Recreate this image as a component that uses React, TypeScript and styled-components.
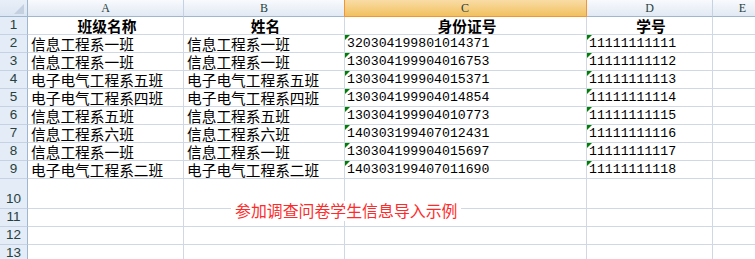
import React from "react";
import styled, { createGlobalStyle } from "styled-components";

const GRID = "#d0d7e5";
const HEAD_LINE = "#9eb6ce";
const HEAD_TEXT = "#27413e";

const columns = ["A", "B", "C", "D", "E"];
const SELECTED_COL = "C";

const rows: string[][] = [
  ["信息工程系一班", "信息工程系一班", "320304199801014371", "11111111111"],
  ["信息工程系一班", "信息工程系一班", "130304199904016753", "11111111112"],
  ["电子电气工程系五班", "电子电气工程系五班", "130304199904015371", "11111111113"],
  ["电子电气工程系四班", "电子电气工程系四班", "130304199904014854", "11111111114"],
  ["信息工程系五班", "信息工程系五班", "130304199904010773", "11111111115"],
  ["信息工程系六班", "信息工程系六班", "140303199407012431", "11111111116"],
  ["信息工程系一班", "信息工程系一班", "130304199904015697", "11111111117"],
  ["电子电气工程系二班", "电子电气工程系二班", "140303199407011690", "11111111118"],
];

const GlobalStyle = createGlobalStyle`
  html, body {
    margin: 0;
    padding: 0;
    background: #fff;
    overflow: hidden;
  }
  * { box-sizing: border-box; }
`;

function App() {
  return (
    <>
      <GlobalStyle />
      <Sheet>
        <Grid>
          <Corner>
            <CornerMark />
          </Corner>
          {columns.map((c) => (
            <ColHead key={c} $selected={c === SELECTED_COL}>
              {c}
            </ColHead>
          ))}

          <RowHead $h={18}>1</RowHead>
          <Cell $h={18} $bold $center>班级名称</Cell>
          <Cell $h={18} $bold $center>姓名</Cell>
          <Cell $h={18} $bold $center>身份证号</Cell>
          <Cell $h={18} $bold $center>学号</Cell>
          <Cell $h={18} />

          {rows.map((r, i) => (
            <React.Fragment key={i}>
              <RowHead $h={18}>{i + 2}</RowHead>
              <Cell $h={18}>{r[0]}</Cell>
              <Cell $h={18}>{r[1]}</Cell>
              <Cell $h={18} $num>
                <TextFlag />
                {r[2]}
              </Cell>
              <Cell $h={18} $num>
                <TextFlag />
                {r[3]}
              </Cell>
              <Cell $h={18} />
            </React.Fragment>
          ))}

          {[
            [10, 30],
            [11, 18],
            [12, 18],
            [13, 18],
          ].map(([n, h]) => (
            <React.Fragment key={n}>
              <RowHead $h={h}>{n}</RowHead>
              <Cell $h={h} />
              <Cell $h={h} />
              <Cell $h={h} />
              <Cell $h={h} />
              <Cell $h={h} />
            </React.Fragment>
          ))}
        </Grid>
        <Caption>参加调查问卷学生信息导入示例</Caption>
      </Sheet>
    </>
  );
}

export default App;

const Sheet = styled.div`
  position: relative;
  width: 755px;
  height: 259px;
  overflow: hidden;
  background: #fff;
`;

const Grid = styled.div`
  display: grid;
  grid-template-columns: 28px 156px 161px 242px 126px 60px;
`;

const Corner = styled.div`
  position: relative;
  height: 17px;
  background: linear-gradient(#e9eff8, #dbe5f3);
  border-right: 1px solid ${HEAD_LINE};
  border-bottom: 1px solid ${HEAD_LINE};
`;

const CornerMark = styled.div`
  position: absolute;
  right: 3px;
  bottom: 2px;
  width: 0;
  height: 0;
  border-left: 10px solid transparent;
  border-bottom: 10px solid #c4cfdf;
`;

const ColHead = styled.div<{ $selected?: boolean }>`
  height: 17px;
  display: flex;
  align-items: center;
  justify-content: center;
  font-family: "Liberation Serif", "Noto Sans CJK SC", serif;
  font-size: 12px;
  line-height: 15px;
  color: ${HEAD_TEXT};
  background: ${(p) =>
    p.$selected
      ? "linear-gradient(#f9dca6, #f1c15f)"
      : "linear-gradient(#f8fafd, #e2e9f3)"};
  border-right: 1px solid ${(p) => (p.$selected ? "#f29536" : "#c5d2e3")};
  border-bottom: 1px solid ${(p) => (p.$selected ? "#f29536" : HEAD_LINE)};
  ${(p) => (p.$selected ? "box-shadow: inset 1px 0 0 #f29536;" : "")}
  ${(p) => (p.$selected ? "margin-left: -1px;" : "")}
`;

const RowHead = styled.div<{ $h: number }>`
  height: ${(p) => p.$h}px;
  display: flex;
  align-items: flex-end;
  justify-content: center;
  padding-bottom: 1px;
  font-family: "Liberation Sans", "DejaVu Sans", sans-serif;
  font-size: 13.5px;
  line-height: 16px;
  color: ${HEAD_TEXT};
  background: #e4ecf7;
  border-right: 1px solid ${HEAD_LINE};
  border-bottom: 1px solid #c5d2e3;
`;

const Cell = styled.div<{ $h: number; $bold?: boolean; $center?: boolean; $num?: boolean }>`
  position: relative;
  height: ${(p) => p.$h}px;
  display: flex;
  align-items: flex-end;
  justify-content: ${(p) => (p.$center ? "center" : "flex-start")};
  padding: 0 0 0 ${(p) => (p.$num ? "2px" : "3px")};
  white-space: nowrap;
  font-family: ${(p) =>
    p.$num
      ? '"Liberation Mono", "DejaVu Sans Mono", monospace'
      : '"Noto Sans CJK SC", "Noto Sans", sans-serif'};
  font-size: ${(p) => (p.$num ? "13.2px" : "14.7px")};
  font-weight: ${(p) => (p.$bold ? 700 : 400)};
  line-height: 17px;
  color: #000;
  border-right: 1px solid ${GRID};
  border-bottom: 1px solid ${GRID};
`;

const TextFlag = styled.span`
  position: absolute;
  left: 0;
  top: 0;
  width: 0;
  height: 0;
  border-top: 5px solid #008000;
  border-right: 5px solid transparent;
`;

const Caption = styled.div`
  position: absolute;
  left: 231px;
  top: 201px;
  padding: 0 4px;
  background: #fff;
  font-family: "Noto Sans CJK SC", "Noto Sans", sans-serif;
  font-size: 15.9px;
  line-height: 20px;
  color: #ff2b2b;
  white-space: nowrap;
`;
